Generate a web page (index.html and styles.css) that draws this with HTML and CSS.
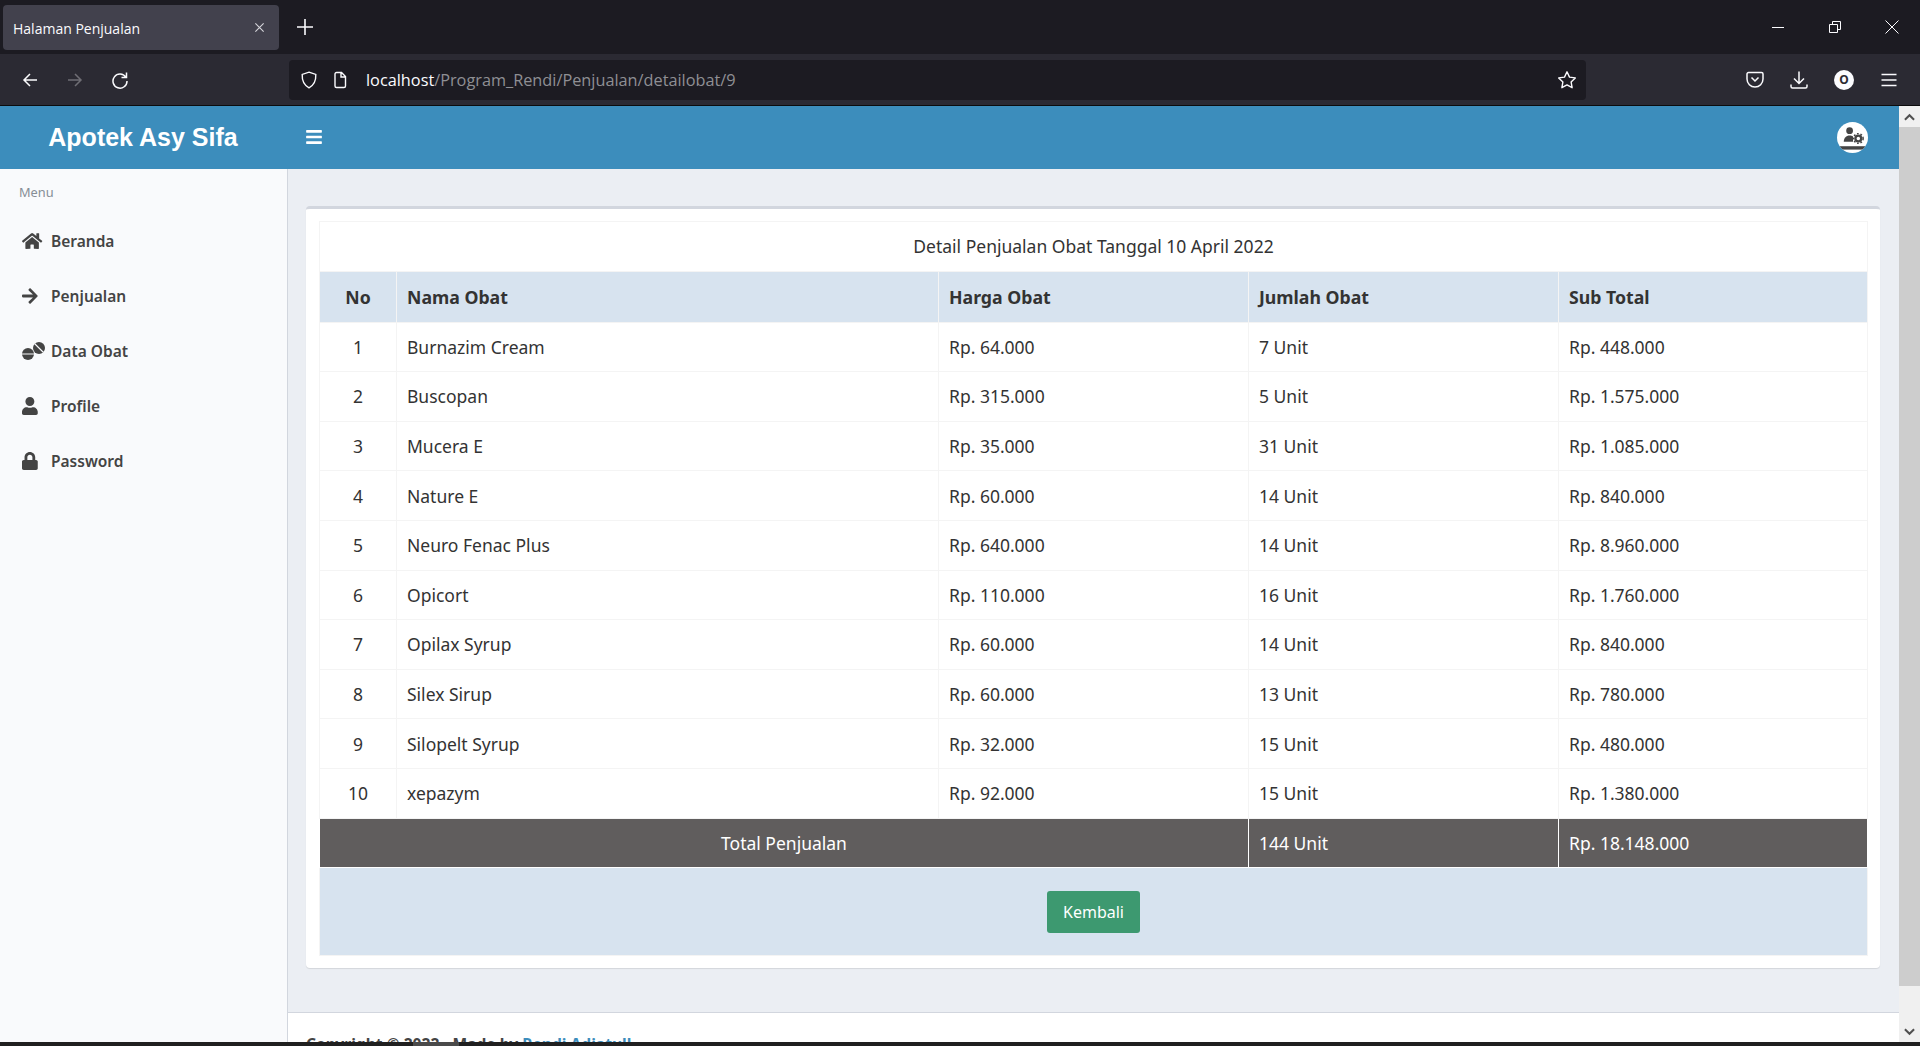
FILE: index.html
```html
<!DOCTYPE html>
<html lang="en">
<head>
    <meta charset="UTF-8">
    <title>Halaman Penjualan</title>
    <link rel="stylesheet" href="styles.css">
</head>
<body>

<!-- Browser tabs -->
<div class="tabstrip">
    <div class="tab">
        <span class="tab-title">Halaman Penjualan</span>
        <svg class="tab-close" viewBox="0 0 12 12"><path d="M1.5 1.5l9 9M10.5 1.5l-9 9"/></svg>
    </div>
    <svg class="new-tab" viewBox="0 0 16 16"><path d="M8 0v16M0 8h16"/></svg>
    <div class="win-controls">
        <svg class="win-icon" viewBox="0 0 14 14"><path d="M1 7.5h12"/></svg>
        <svg class="win-icon" viewBox="0 0 14 14"><path d="M1.5 4.5h8v8h-8zM4.5 4.5v-3h8v8h-3"/></svg>
        <svg class="win-icon" viewBox="0 0 14 14"><path d="M0.5 0.5l13 13M13.5 0.5l-13 13"/></svg>
    </div>
</div>

<!-- Browser toolbar -->
<div class="toolbar">
    <div class="nav-buttons">
        <svg class="tool-icon" viewBox="0 0 18 18"><path d="M16 9H3M9 3L3 9l6 6"/></svg>
        <svg class="tool-icon dim" viewBox="0 0 18 18"><path d="M2 9h13M9 3l6 6-6 6"/></svg>
        <svg class="tool-icon" viewBox="0 0 18 18"><path d="M14.8 6.2A7 7 0 1 0 16 10M15.5 1.5v5h-5"/></svg>
    </div>
    <div class="urlbar">
        <svg class="url-icon" viewBox="0 0 18 18"><path d="M9 1.2l6.8 2.2c.3 6.5-1.8 10.8-6.8 13.4C4 14.2 1.9 9.9 2.2 3.4z"/></svg>
        <svg class="url-icon doc" viewBox="0 0 18 18"><path d="M4 3a1.5 1.5 0 0 1 1.5-1.5h5L14.5 5.5V15a1.5 1.5 0 0 1-1.5 1.5H5.5A1.5 1.5 0 0 1 4 15zM10 1.5V6h4.5"/></svg>
        <span class="url-text"><span class="url-host">localhost</span>/Program_Rendi/Penjualan/detailobat/9</span>
        <svg class="url-star" viewBox="0 0 20 20"><path d="M10 1.8l2.5 5.3 5.8.8-4.2 4 1 5.8-5.1-2.8-5.1 2.8 1-5.8-4.2-4 5.800-.8z"/></svg>
    </div>
    <div class="tool-right">
        <svg class="tool-icon" viewBox="0 0 18 18"><path d="M2.5 1.5h13a1.5 1.5 0 0 1 1.5 1.5v5a8 8 0 0 1-16 0V3a1.5 1.5 0 0 1 1.500-1.500zM5.500 6.500L9 10l3.500-3.500"/></svg>
        <svg class="tool-icon" viewBox="0 0 18 18"><path d="M9 0.5v11.5M4 7.5l5 5 5-5M1 13.5v2a1.5 1.5 0 0 0 1.5 1.500h13a1.500 1.500 0 0 0 1.500-1.500v-2"/></svg>
        <div class="account">O</div>
        <svg class="tool-icon" viewBox="0 0 18 18"><path d="M1.500 3.500h15M1.500 9h15M1.500 14.500h15"/></svg>
    </div>
</div>

<!-- Page viewport -->
<div class="viewport">
    <div class="page">
        <div class="topbar">
            <div class="brand">Apotek Asy Sifa</div>
            <svg class="burger" viewBox="0 0 448 512"><path d="M16 132h416c8.837 0 16-7.163 16-16V76c0-8.837-7.163-16-16-16H16C7.163 60 0 67.163 0 76v40c0 8.837 7.163 16 16 16zm0 160h416c8.837 0 16-7.163 16-16v-40c0-8.837-7.163-16-16-16H16c-8.837 0-16 7.163-16 16v40c0 8.837 7.163 16 16 16zm0 160h416c8.837 0 16-7.163 16-16v-40c0-8.837-7.163-16-16-16H16c-8.837 0-16 7.163-16 16v40c0 8.837 7.163 16 16 16z"/></svg>
            <div class="avatar">
                <svg viewBox="0 0 32 32">
                    <rect x="3" y="25" width="26" height="3.5" fill="#444"/>
                    <circle cx="13" cy="9" r="3.5" fill="#444"/>
                    <path d="M7 20.5c0-4 2.5-6.5 6-6.5 1.5 0 2.5.3 3.5 1v5.5z" fill="#444"/>
                    <circle cx="22" cy="17" r="3" fill="none" stroke="#444" stroke-width="2.4"/>
                    <circle cx="22" cy="17" r="5" fill="none" stroke="#444" stroke-width="1.5" stroke-dasharray="1.8 1.8"/>
                </svg>
            </div>
        </div>

        <div class="body-row">
            <div class="sidebar">
                <div class="menu-label">Menu</div>
                <a class="menu-item" href="#">
                    <svg class="menu-icon" preserveAspectRatio="xMinYMid meet" viewBox="0 0 576 512"><path d="M280.37 148.26L96 300.11V464a16 16 0 0 0 16 16l112.06-.29a16 16 0 0 0 15.92-16V368a16 16 0 0 1 16-16h64a16 16 0 0 1 16 16v95.64a16 16 0 0 0 16 16.05L464 480a16 16 0 0 0 16-16V300L295.67 148.26a12.19 12.19 0 0 0-15.3 0zM571.6 251.47L488 182.56V44.05a12 12 0 0 0-12-12h-56a12 12 0 0 0-12 12v72.61L318.47 43a48 48 0 0 0-61 0L4.34 251.47a12 12 0 0 0-1.6 16.9l25.5 31A12 12 0 0 0 45.15 301l235.22-193.74a12.19 12.19 0 0 1 15.3 0L530.9 301a12 12 0 0 0 16.9-1.6l25.5-31a12 12 0 0 0-1.7-16.93z"/></svg>
                    Beranda
                </a>
                <a class="menu-item" href="#">
                    <svg class="menu-icon" preserveAspectRatio="xMinYMid meet" viewBox="0 0 448 512"><path d="M190.5 66.9l22.2-22.2c9.4-9.4 24.6-9.4 33.9 0L441 239c9.4 9.4 9.4 24.6 0 33.9L246.6 467.3c-9.4 9.4-24.6 9.4-33.9 0l-22.2-22.2c-9.5-9.5-9.3-25 .4-34.3L311.4 296H24c-13.3 0-24-10.7-24-24v-32c0-13.3 10.7-24 24-24h287.4L190.9 101.2c-9.8-9.3-10-24.8-.4-34.3z"/></svg>
                    Penjualan
                </a>
                <a class="menu-item" href="#">
                    <svg class="menu-icon" preserveAspectRatio="xMinYMid meet" viewBox="0 0 23 18">
                        <circle cx="6" cy="12" r="6"/>
                        <circle cx="17" cy="6" r="6"/>
                        <path class="pill-slit" d="M0 12h12M12.5 1.5l9 9"/>
                    </svg>
                    Data Obat
                </a>
                <a class="menu-item" href="#">
                    <svg class="menu-icon" preserveAspectRatio="xMinYMid meet" viewBox="0 0 448 512"><path d="M224 256c70.7 0 128-57.3 128-128S294.7 0 224 0 96 57.3 96 128s57.3 128 128 128zm89.6 32h-16.7c-22.2 10.2-46.9 16-72.9 16s-50.6-5.8-72.9-16h-16.7C60.2 288 0 348.2 0 422.4V464c0 26.5 21.5 48 48 48h352c26.5 0 48-21.5 48-48v-41.6c0-74.2-60.2-134.4-134.4-134.4z"/></svg>
                    Profile
                </a>
                <a class="menu-item" href="#">
                    <svg class="menu-icon" preserveAspectRatio="xMinYMid meet" viewBox="0 0 448 512"><path d="M400 224h-24v-72C376 68.2 307.8 0 224 0S72 68.2 72 152v72H48c-26.5 0-48 21.5-48 48v192c0 26.5 21.5 48 48 48h352c26.5 0 48-21.5 48-48V272c0-26.5-21.5-48-48-48zm-104 0H152v-72c0-39.7 32.3-72 72-72s72 32.3 72 72v72z"/></svg>
                    Password
                </a>
            </div>

            <div class="main">
                <div class="content">
                    <div class="card">
                        <table class="detail-table">
                            <colgroup>
                                <col class="col-no">
                                <col class="col-nama">
                                <col class="col-harga">
                                <col class="col-jumlah">
                                <col class="col-sub">
                            </colgroup>
                            <tr class="title-row"><td colspan="5">Detail Penjualan Obat Tanggal 10 April 2022</td></tr>
                            <tr class="head-row"><th class="center">No</th><th>Nama Obat</th><th>Harga Obat</th><th>Jumlah Obat</th><th>Sub Total</th></tr>
                            <tr><td class="center">1</td><td>Burnazim Cream</td><td>Rp. 64.000</td><td>7 Unit</td><td>Rp. 448.000</td></tr>
                            <tr><td class="center">2</td><td>Buscopan</td><td>Rp. 315.000</td><td>5 Unit</td><td>Rp. 1.575.000</td></tr>
                            <tr><td class="center">3</td><td>Mucera E</td><td>Rp. 35.000</td><td>31 Unit</td><td>Rp. 1.085.000</td></tr>
                            <tr><td class="center">4</td><td>Nature E</td><td>Rp. 60.000</td><td>14 Unit</td><td>Rp. 840.000</td></tr>
                            <tr><td class="center">5</td><td>Neuro Fenac Plus</td><td>Rp. 640.000</td><td>14 Unit</td><td>Rp. 8.960.000</td></tr>
                            <tr><td class="center">6</td><td>Opicort</td><td>Rp. 110.000</td><td>16 Unit</td><td>Rp. 1.760.000</td></tr>
                            <tr><td class="center">7</td><td>Opilax Syrup</td><td>Rp. 60.000</td><td>14 Unit</td><td>Rp. 840.000</td></tr>
                            <tr><td class="center">8</td><td>Silex Sirup</td><td>Rp. 60.000</td><td>13 Unit</td><td>Rp. 780.000</td></tr>
                            <tr><td class="center">9</td><td>Silopelt Syrup</td><td>Rp. 32.000</td><td>15 Unit</td><td>Rp. 480.000</td></tr>
                            <tr><td class="center">10</td><td>xepazym</td><td>Rp. 92.000</td><td>15 Unit</td><td>Rp. 1.380.000</td></tr>
                            <tr class="total-row"><td colspan="3" class="center">Total Penjualan</td><td>144 Unit</td><td>Rp. 18.148.000</td></tr>
                            <tr class="action-row"><td colspan="5"><a class="btn-back" href="#">Kembali</a></td></tr>
                        </table>
                    </div>
                </div>
                <div class="footer">
                    <strong>Copyright &copy; 2022 - Made by <a href="#">Rendi Adiatull</a></strong>
                </div>
            </div>
        </div>
    </div>

    <!-- Scrollbar -->
    <div class="scrollbar">
        <div class="scroll-btn"><svg viewBox="0 0 12 8"><path d="M1 7l5-5 5 5"/></svg></div>
        <div class="scroll-track"><div class="scroll-thumb"></div></div>
        <div class="scroll-btn"><svg viewBox="0 0 12 8"><path d="M1 1l5 5 5-5"/></svg></div>
    </div>
</div>

<div class="bottom-edge"><div class="bottom-mark"></div></div>

</body>
</html>
```

FILE: styles.css
```css
* {
    box-sizing: border-box;
}

html, body {
    height: 100%;
}

body {
    margin: 0;
    height: 1046px;
    overflow: hidden;
    display: flex;
    flex-direction: column;
    font-family: 'Noto Sans', 'Open Sans', sans-serif;
    background: #fff;
    color: #333;
}

/* Browser tabs */
.tabstrip {
    height: 54px;
    flex: none;
    display: flex;
    align-items: center;
    background: #1c1b22;
    padding-left: 3px;
}

.tab {
    width: 276px;
    height: 45px;
    margin-top: 1px;
    padding: 0 14px 0 10px;
    display: flex;
    align-items: center;
    justify-content: space-between;
    background: #42414d;
    border-radius: 4px;
}

.tab-title {
    font-size: 14px;
    color: #fbfbfe;
    font-family: 'Open Sans', sans-serif;
    padding-top: 1px;
}

.tab-close {
    width: 11px;
    height: 11px;
    fill: none;
    stroke: #d5d5da;
    stroke-width: 1.2;
}

.new-tab {
    width: 16px;
    height: 16px;
    margin-left: 18px;
    fill: none;
    stroke: #fbfbfe;
    stroke-width: 1.6;
}

.win-controls {
    margin-left: auto;
    display: flex;
    gap: 43px;
    padding-right: 21px;
}

.win-icon {
    width: 14px;
    height: 14px;
    fill: none;
    stroke: #fbfbfe;
    stroke-width: 1;
}

/* Browser toolbar */
.toolbar {
    height: 52px;
    flex: none;
    display: flex;
    align-items: center;
    background: #2b2a33;
    border-bottom: 1px solid #0c0c0d;
    padding-left: 21px;
}

.nav-buttons {
    display: flex;
    gap: 27px;
    width: 268px;
}

.tool-icon {
    width: 18px;
    height: 18px;
    fill: none;
    stroke: #fbfbfe;
    stroke-width: 1.5;
    flex: none;
}

.tool-icon.dim {
    stroke: #6f6e75;
}

.urlbar {
    width: 1297px;
    height: 40px;
    display: flex;
    align-items: center;
    padding: 0 9px 0 11px;
    background: #1c1b22;
    border-radius: 4px;
}

.url-icon {
    width: 18px;
    height: 18px;
    fill: none;
    stroke: #fbfbfe;
    stroke-width: 1.4;
    margin-right: 13px;
}

.url-icon.doc {
    margin-right: 17px;
}

.url-text {
    font-family: 'Open Sans', sans-serif;
    font-size: 16.3px;
    color: #8f8f94;
    padding-top: 1px;
}

.url-host {
    color: #fbfbfe;
}

.url-star {
    width: 20px;
    height: 20px;
    margin-left: auto;
    fill: none;
    stroke: #fbfbfe;
    stroke-width: 1.4;
    stroke-linejoin: round;
}

.tool-right {
    display: flex;
    align-items: center;
    margin-left: 160px;
    gap: 26px;
}

.account {
    width: 20px;
    height: 20px;
    border-radius: 50%;
    background: #fbfbfe;
    color: #2b2a33;
    font-size: 12px;
    font-weight: 700;
    line-height: 20px;
    text-align: center;
}

/* Page viewport */
.viewport {
    flex: 1;
    min-height: 0;
    display: flex;
}

.page {
    flex: 1;
    min-width: 0;
    display: flex;
    flex-direction: column;
}

.topbar {
    height: 63px;
    flex: none;
    display: flex;
    align-items: center;
    background: #3c8dbc;
    padding-right: 31px;
}

.brand {
    width: 286px;
    text-align: center;
    font-family: 'Liberation Sans', sans-serif;
    font-size: 25px;
    font-weight: 700;
    color: #fff;
}

.burger {
    width: 16px;
    height: 18px;
    margin: 0 0 1px 20px;
    fill: #fff;
}

.avatar {
    width: 31px;
    height: 31px;
    margin-left: auto;
    border-radius: 50%;
    background: #fff;
    overflow: hidden;
}

.avatar svg {
    display: block;
    width: 31px;
    height: 31px;
}

.body-row {
    flex: 1;
    min-height: 0;
    display: flex;
}

/* Sidebar */
.sidebar {
    width: 288px;
    flex: none;
    background: #f9fafc;
    border-right: 1px solid #d2d6de;
}

.menu-label {
    padding: 14px 0 0 19px;
    height: 44px;
    font-size: 12.8px;
    color: #868e96;
}

.menu-item {
    height: 55px;
    display: flex;
    align-items: center;
    padding-left: 22px;
    font-size: 15.5px;
    font-weight: 600;
    color: #444;
    text-decoration: none;
}

.menu-icon {
    width: 29px;
    height: 18px;
    fill: #444;
    flex: none;
}

.pill-slit {
    fill: none;
    stroke: #f9fafc;
    stroke-width: 1.2;
}

/* Main area */
.main {
    flex: 1;
    min-width: 0;
    display: flex;
    flex-direction: column;
    background: #ebeef3;
}

.content {
    height: 843px;
    flex: none;
    padding: 37px 19px 0 18px;
}

.card {
    height: 762px;
    padding: 12px 12px 12px 13px;
    background: #fff;
    border-top: 3px solid #d2d6de;
    border-radius: 4px;
    box-shadow: 0 1px 1px rgba(0, 0, 0, 0.1);
}

.detail-table {
    width: 100%;
    border-collapse: collapse;
    table-layout: fixed;
    font-size: 17.5px;
    color: #333;
}

.col-no { width: 77px; }
.col-nama { width: 542px; }
.col-harga { width: 310px; }
.col-jumlah { width: 310px; }
.col-sub { width: 309px; }

.detail-table th,
.detail-table td {
    height: 49.6px;
    padding: 0 10px;
    text-align: left;
    border: 1px solid #f4f4f4;
}

.detail-table .center {
    text-align: center;
}

.title-row td {
    text-align: center;
}

.detail-table .head-row th {
    height: 51px;
    background: #d7e3ef;
    font-size: 17.7px;
    font-weight: 700;
    color: #333;
}

.total-row td {
    background: #605d5d;
    color: #fff;
    border-color: #fff;
}

.detail-table .action-row td {
    height: 88px;
    text-align: center;
    background: #d7e3ef;
}

.btn-back {
    display: inline-block;
    padding: 10px 16px;
    background: #3d9970;
    border-radius: 3px;
    color: #fff;
    font-size: 16px;
    text-decoration: none;
}

.footer {
    flex: 1;
    padding: 20px 18px;
    background: #fff;
    border-top: 1px solid #d2d6de;
    font-size: 15.6px;
    color: #444;
}

.footer a {
    color: #3c8dbc;
    text-decoration: none;
}

/* Scrollbar */
.scrollbar {
    width: 21px;
    flex: none;
    display: flex;
    flex-direction: column;
    background: #f0f0f0;
}

.scroll-btn {
    height: 21px;
    flex: none;
    display: flex;
    align-items: center;
    justify-content: center;
}

.scroll-btn svg {
    width: 11px;
    height: 8px;
    fill: none;
    stroke: #505050;
    stroke-width: 2.2;
}

.scroll-track {
    flex: 1;
}

.scroll-thumb {
    height: 859px;
    background: #cdcdcd;
}

.bottom-edge {
    height: 4px;
    flex: none;
    background: #202020;
}

.bottom-mark {
    width: 46px;
    height: 4px;
    margin-left: 413px;
    background: #4a4a4a;
}
```
